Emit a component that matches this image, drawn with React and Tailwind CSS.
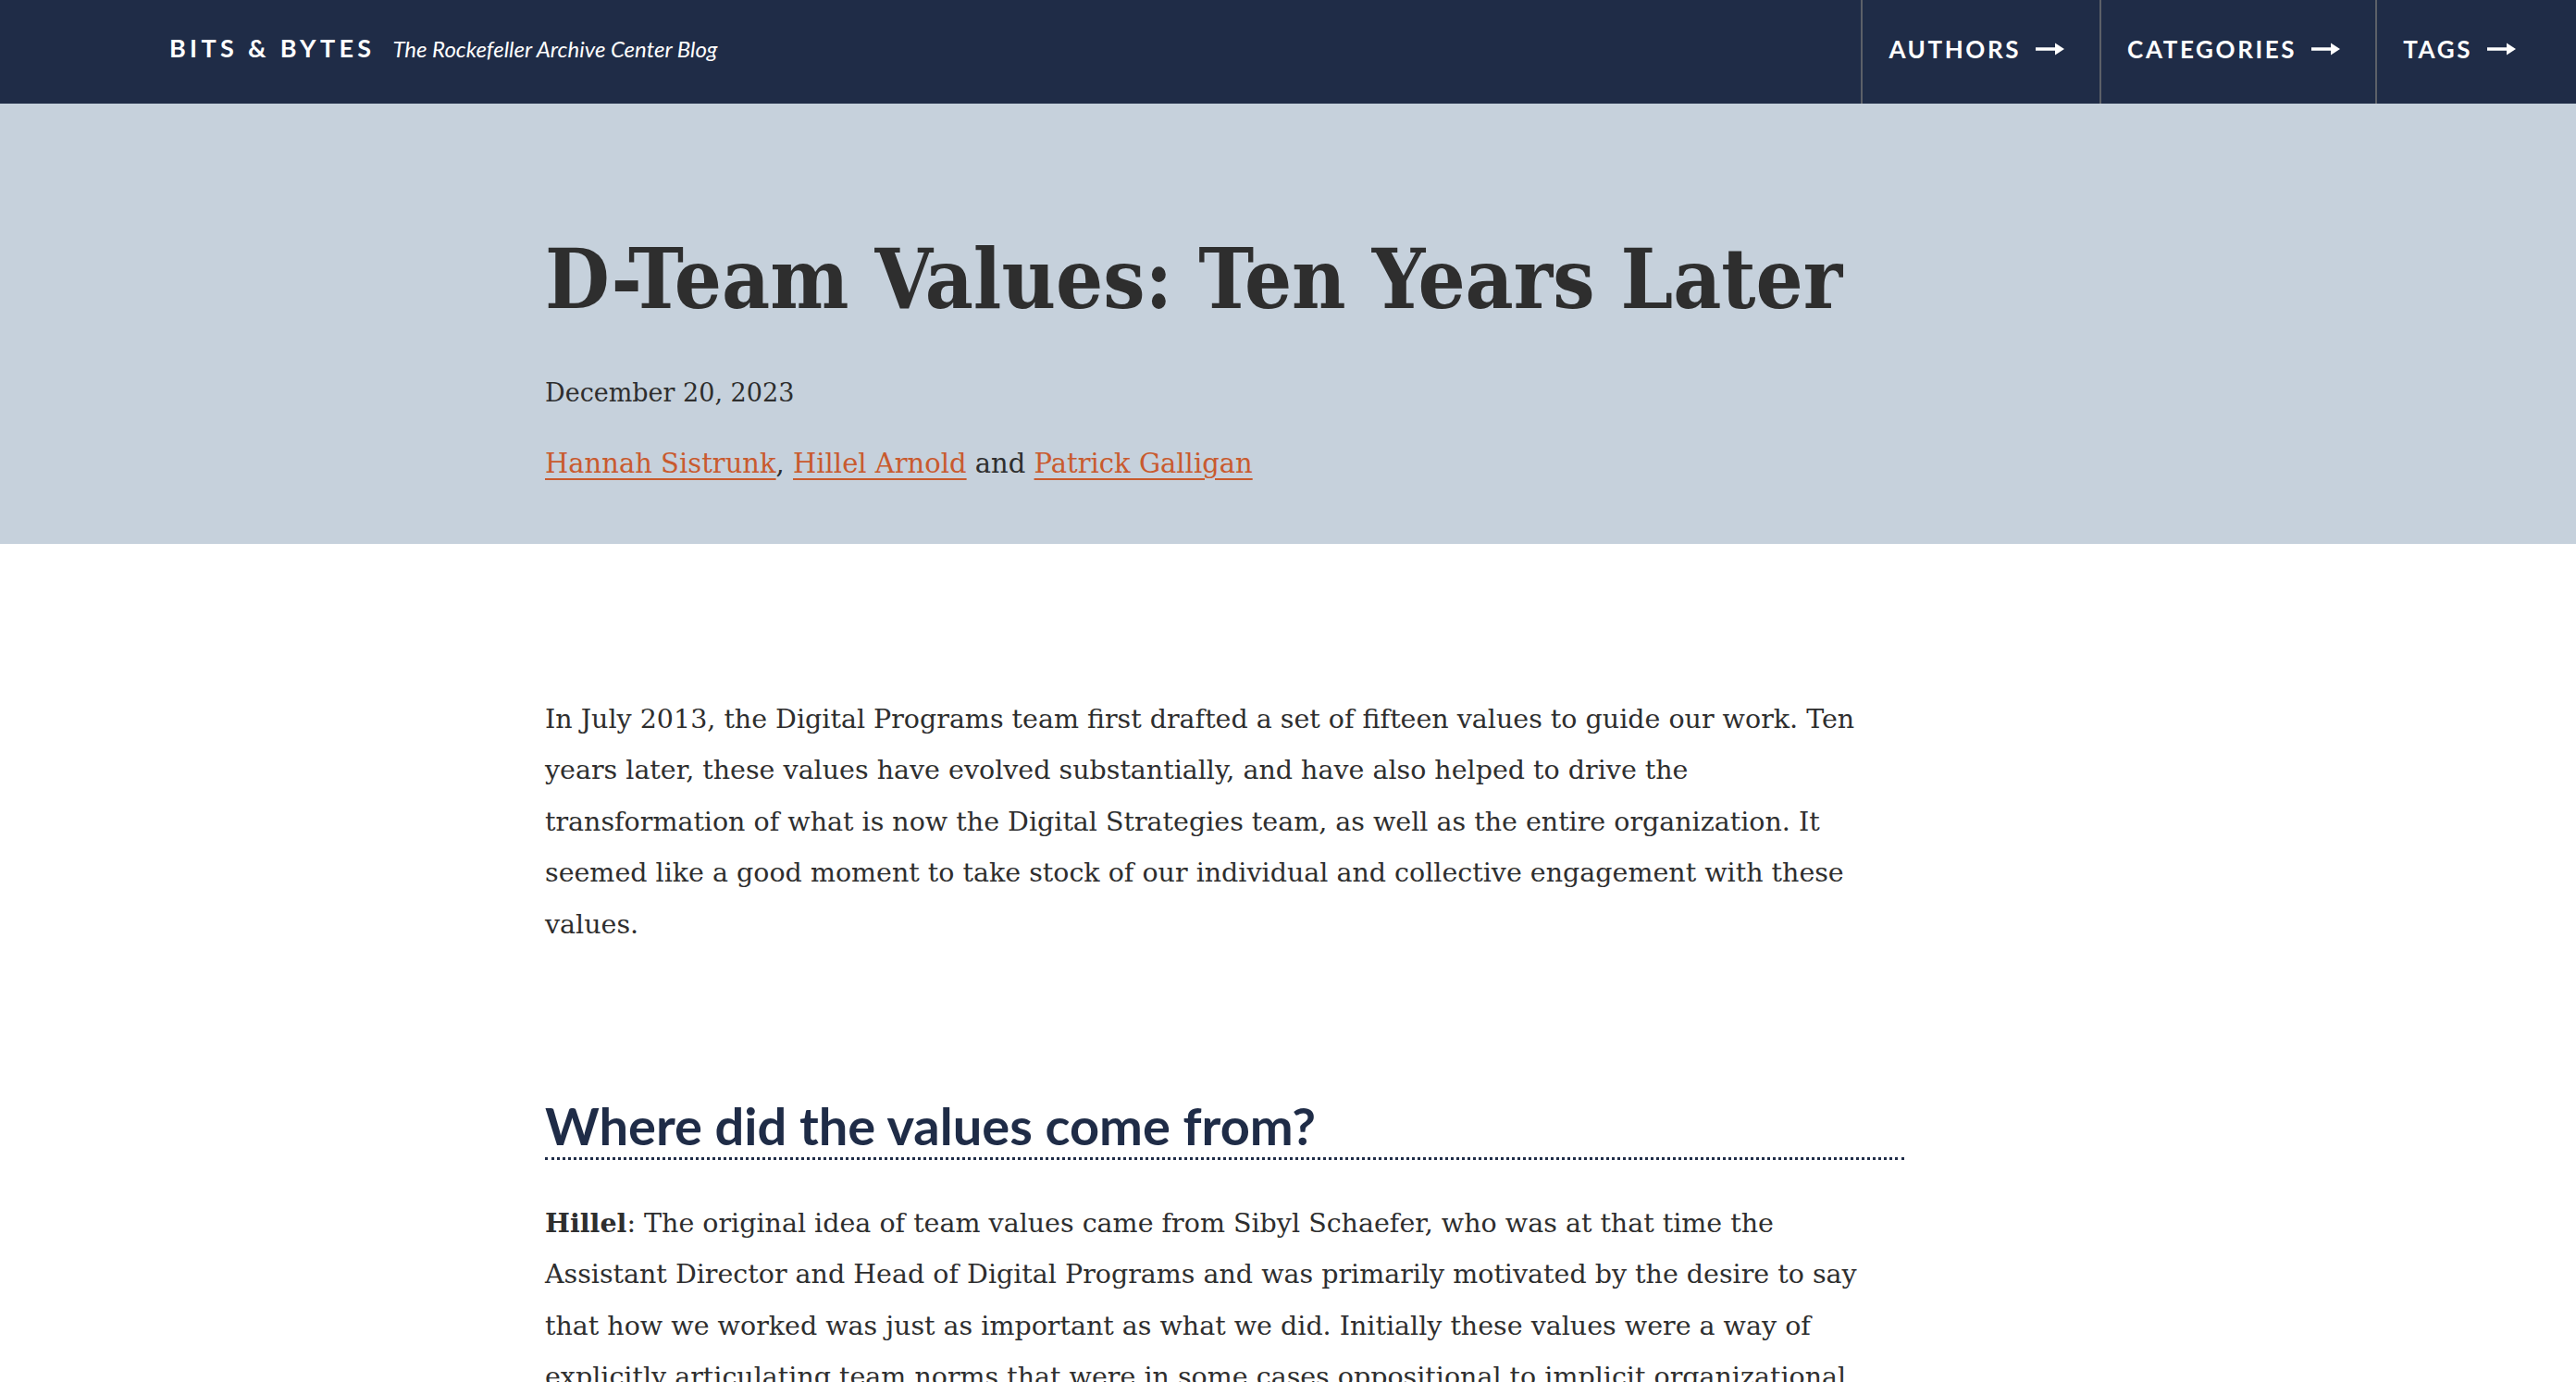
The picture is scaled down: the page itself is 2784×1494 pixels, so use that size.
import React from "react";

const serif = "font-['DejaVu_Serif',serif]";
const lato = "font-['Lato','Liberation_Sans',sans-serif]";

function Arrow() {
  return (
    <svg width="32" height="16" viewBox="0 0 32 16" className="ml-4 shrink-0" aria-hidden="true">
      <path d="M0 8 H24" stroke="white" strokeWidth="3.5" />
      <path d="M21 1.5 L31 8 L21 14.5 Z" fill="white" />
    </svg>
  );
}

function NavItem({ label }) {
  return (
    <a href="#" className="flex items-center h-full border-l-2 border-[#5c6068] pl-[28px] pr-[37px] pb-[6px] text-white font-bold text-[26px] tracking-[0.1em]">
      {label}
      <Arrow />
    </a>
  );
}

export default function App() {
  return (
    <div className="min-h-screen bg-white text-[#2e2e2e]">
      {/* header */}
      <header className={`flex items-center justify-between h-[112px] bg-[#1f2c47] pl-[183px] pr-[27px] ${lato}`}>
        <div className="flex items-baseline gap-[19px] pb-[7px] text-white">
          <span className="font-bold text-[27px] tracking-[0.16em]">BITS &amp; BYTES</span>
          <span className="italic text-[24px]">The Rockefeller Archive Center Blog</span>
        </div>
        <nav className="flex h-full">
          <NavItem label="AUTHORS" />
          <NavItem label="CATEGORIES" />
          <NavItem label="TAGS" />
        </nav>
      </header>

      {/* hero */}
      <section className={`bg-[#c6d1dc] pt-[145px] pb-[67px] ${serif}`}>
        <div className="ml-[589px] w-[1469px]">
          <h1 className="font-bold text-[89.5px] leading-none font-stretch-condensed text-[#2e2e2e]">
            D-Team Values: Ten Years Later
          </h1>
          <p className="mt-[58px] text-[27px] leading-[40px]">December 20, 2023</p>
          <p className="mt-[36px] text-[29px] leading-[40px]">
            <a href="#" className="text-[#c95a2e] underline underline-offset-[6px] decoration-2">Hannah Sistrunk</a>,{" "}
            <a href="#" className="text-[#c95a2e] underline underline-offset-[6px] decoration-2">Hillel Arnold</a> and{" "}
            <a href="#" className="text-[#c95a2e] underline underline-offset-[6px] decoration-2">Patrick Galligan</a>
          </p>
        </div>
      </section>

      {/* article */}
      <article className={`ml-[589px] w-[1469px] pt-[162px] pb-[80px] ${serif}`}>
        <p className="max-w-[1455px] text-[28.5px] leading-[55.6px]">
          In July 2013, the Digital Programs team first drafted a set of fifteen values to guide our work. Ten
          years later, these values have evolved substantially, and have also helped to drive the
          transformation of what is now the Digital Strategies team, as well as the entire organization. It
          seemed like a good moment to take stock of our individual and collective engagement with these
          values.
        </p>

        <h2 className={`mt-[156px] border-b-[3px] border-dotted border-[#1f2c47] text-[56px] leading-[1.2] font-bold text-[#1f2c47] ${lato}`}>
          Where did the values come from?
        </h2>

        <p className="mt-[41px] max-w-[1455px] text-[28.5px] leading-[55.6px]">
          <strong>Hillel</strong>: The original idea of team values came from Sibyl Schaefer, who was at that time the
          Assistant Director and Head of Digital Programs and was primarily motivated by the desire to say
          that how we worked was just as important as what we did. Initially these values were a way of
          explicitly articulating team norms that were in some cases oppositional to implicit organizational
          norms.
        </p>
      </article>
    </div>
  );
}
